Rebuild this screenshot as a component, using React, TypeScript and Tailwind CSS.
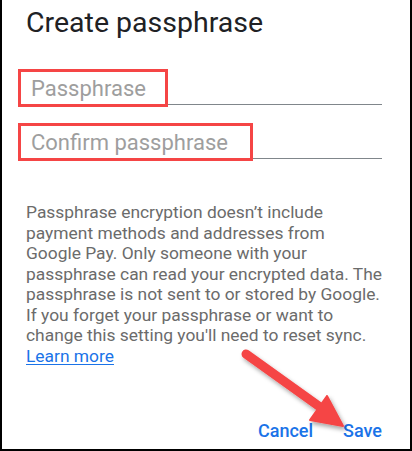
import React from "react";

const bodyLines = [
  "Passphrase encryption doesn’t include",
  "payment methods and addresses from",
  "Google Pay. Only someone with your",
  "passphrase can read your encrypted data. The",
  "passphrase is not sent to or stored by Google.",
  "If you forget your passphrase or want to",
  "change this setting you'll need to reset sync.",
];

function Field({ label, boxWidth }: { label: string; boxWidth: string }) {
  return (
    <div className="relative h-[35px] border-b border-[#80868b] pt-[6px] pl-[5px]">
      <span className="block text-[22px] leading-[26px] text-[#9e9e9e]">
        {label}
      </span>
      {/* highlight box */}
      <div
        className={`absolute -left-[8px] -top-[1px] h-[38px] border-[3px] border-[#f54545] ${boxWidth}`}
      />
    </div>
  );
}

function Arrow() {
  return (
    <svg
      className="pointer-events-none absolute left-0 top-0"
      width="412"
      height="451"
      viewBox="0 0 412 451"
    >
      <defs>
        <filter id="shadow" x="-20%" y="-20%" width="140%" height="140%">
          <feDropShadow dx="2" dy="3" stdDeviation="2" floodColor="#000" floodOpacity="0.35" />
        </filter>
      </defs>
      <g filter="url(#shadow)" fill="#f54545" stroke="#f54545">
        <line x1="244" y1="354" x2="318" y2="407" strokeWidth="9" strokeLinecap="round" />
        <polygon points="325,396 308,420 341,426" strokeWidth="2" strokeLinejoin="round" />
      </g>
    </svg>
  );
}

export default function App() {
  return (
    <div
      className="relative h-[451px] w-[412px] overflow-hidden border-b-2 border-l-2 border-r-2 border-black bg-white"
      style={{ fontFamily: "Roboto, 'Liberation Sans', sans-serif" }}
    >
      <div className="pl-[24px] pr-[28px]">
        <h1 className="pt-[5px] text-[28.5px] leading-[36px] font-normal text-[#202124]">
          Create passphrase
        </h1>

        <div className="mt-[29px] flex flex-col gap-[19px]">
          <Field label="Passphrase" boxWidth="w-[150px]" />
          <Field label="Confirm passphrase" boxWidth="w-[235px]" />
        </div>

        <div className="mt-[43px] text-[17.4px] leading-[20.5px] text-[#6b6b6b]">
          {bodyLines.map((line) => (
            <div key={line} className="whitespace-nowrap">
              {line}
            </div>
          ))}
          <a className="text-[#1a73e8] underline underline-offset-2">Learn more</a>
        </div>

        <div className="mt-[54px] flex justify-end gap-[30px] text-[18px] leading-[22px] font-medium text-[#1a73e8]">
          <button>Cancel</button>
          <button>Save</button>
        </div>
      </div>

      <Arrow />
    </div>
  );
}
